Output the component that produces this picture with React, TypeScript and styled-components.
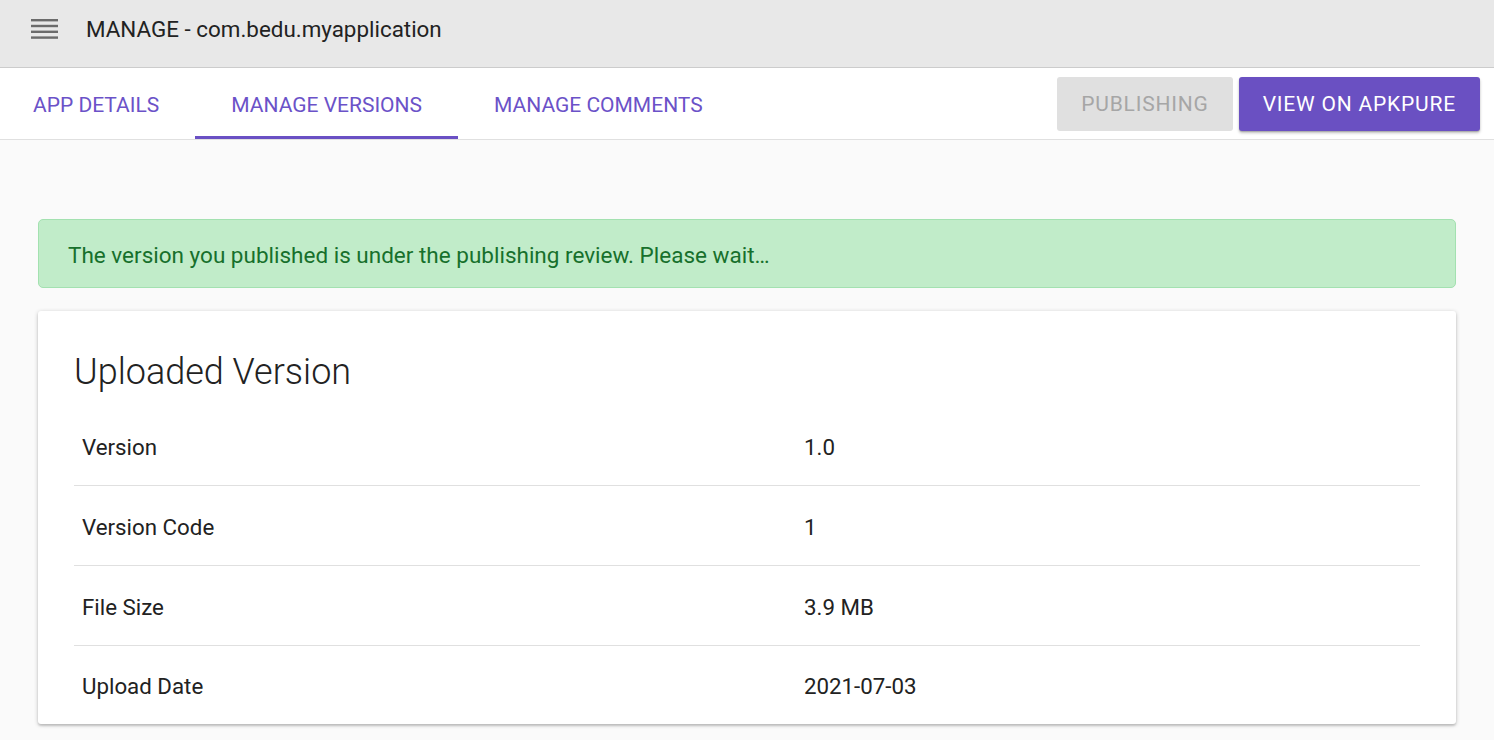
import React from "react";
import styled, { createGlobalStyle } from "styled-components";

const GlobalStyle = createGlobalStyle`
    html, body {
        margin: 0;
        padding: 0;
        background: #fafafa;
        font-family: Roboto, "Liberation Sans", sans-serif;
        color: #222;
    }
    * { box-sizing: border-box; }
`;

const TopBar = styled.header`
    height: 68px;
    display: flex;
    align-items: center;
    gap: 28px;
    padding: 0 0 10px 31px;
    background: #e8e8e8;
    border-bottom: 1px solid #cccccc;
`;

const MenuIcon = styled.svg`
    width: 27px;
    height: 21px;
    flex: none;
    margin-top: 1px;
`;

const PageTitle = styled.h1`
    margin: 0;
    font-size: 22.4px;
    font-weight: 400;
    color: #222;
`;

const TabBar = styled.div`
    height: 72px;
    display: flex;
    align-items: stretch;
    justify-content: space-between;
    background: #fff;
    border-bottom: 1px solid #e0e0e0;
`;

const Tabs = styled.nav`
    display: flex;
    align-items: stretch;
    margin-left: -3px;
`;

const Tab = styled.button<{ $active?: boolean }>`
    display: flex;
    align-items: center;
    padding: 5px 36px 0;
    border: none;
    background: none;
    font-family: inherit;
    font-size: 21px;
    font-weight: 400;
    text-transform: uppercase;
    color: #6b52c8;
    border-bottom: 3px solid ${(p) => (p.$active ? "#6a50c4" : "transparent")};
    cursor: pointer;
`;

const Actions = styled.div`
    display: flex;
    align-items: center;
    gap: 6px;
    padding-right: 14px;
`;

const Button = styled.button<{ $primary?: boolean }>`
    height: 54px;
    padding: 0 24px;
    border: none;
    border-radius: 3px;
    font-family: inherit;
    font-size: 21px;
    letter-spacing: 0.8px;
    text-transform: uppercase;
    background: ${(p) => (p.$primary ? "#6a50c2" : "#e0e0e0")};
    color: ${(p) => (p.$primary ? "#fff" : "#a6a6a6")};
    box-shadow: ${(p) =>
        p.$primary
            ? "0 2px 3px rgba(0,0,0,0.25), 0 1px 1px rgba(0,0,0,0.14)"
            : "none"};
`;

const Main = styled.main`
    padding: 79px 38px 16px;
    display: flex;
    flex-direction: column;
    gap: 23px;
`;

const Alert = styled.div`
    height: 69px;
    display: flex;
    align-items: center;
    padding: 2px 29px 0;
    background: #c1ecc9;
    border: 1px solid #a3e1b0;
    border-radius: 5px;
    color: #17702c;
    font-size: 22.5px;
`;

const Card = styled.section`
    background: #fff;
    border-radius: 3px;
    padding: 40px 36px 0;
    box-shadow: 0 1px 4px rgba(0, 0, 0, 0.22), 0 2px 2px rgba(0, 0, 0, 0.12);
`;

const CardTitle = styled.h2`
    margin: 0 0 13px;
    font-size: 36px;
    font-weight: 300;
    color: #222;
`;

const Row = styled.div<{ $last?: boolean }>`
    display: grid;
    grid-template-columns: 722px 1fr;
    height: ${(p) => (p.$last ? "78px" : "80px")};
    padding-top: 2px;
    align-items: center;
    border-bottom: ${(p) => (p.$last ? "none" : "1px solid #e0e0e0")};
    font-size: 22.3px;
`;

const Cell = styled.div`
    padding: 0 8px;
`;

const rows = [
    ["Version", "1.0"],
    ["Version Code", "1"],
    ["File Size", "3.9 MB"],
    ["Upload Date", "2021-07-03"],
];

export default function App() {
    return (
        <>
            <GlobalStyle />
            <TopBar>
                <MenuIcon viewBox="0 0 27 21">
                    <rect x="0" y="0" width="27" height="2.4" fill="#6b6b6b" />
                    <rect x="0" y="5.8" width="27" height="2.4" fill="#6b6b6b" />
                    <rect x="0" y="11.6" width="27" height="2.4" fill="#6b6b6b" />
                    <rect x="0" y="17.4" width="27" height="2.4" fill="#6b6b6b" />
                </MenuIcon>
                <PageTitle>MANAGE - com.bedu.myapplication</PageTitle>
            </TopBar>
            <TabBar>
                <Tabs>
                    <Tab>App Details</Tab>
                    <Tab $active>Manage Versions</Tab>
                    <Tab>Manage Comments</Tab>
                </Tabs>
                <Actions>
                    <Button>Publishing</Button>
                    <Button $primary>View on APKPure</Button>
                </Actions>
            </TabBar>
            <Main>
                <Alert>The version you published is under the publishing review. Please wait…</Alert>
                <Card>
                    <CardTitle>Uploaded Version</CardTitle>
                    {rows.map(([label, value], i) => (
                        <Row key={label} $last={i === rows.length - 1}>
                            <Cell>{label}</Cell>
                            <Cell>{value}</Cell>
                        </Row>
                    ))}
                </Card>
            </Main>
        </>
    );
}
